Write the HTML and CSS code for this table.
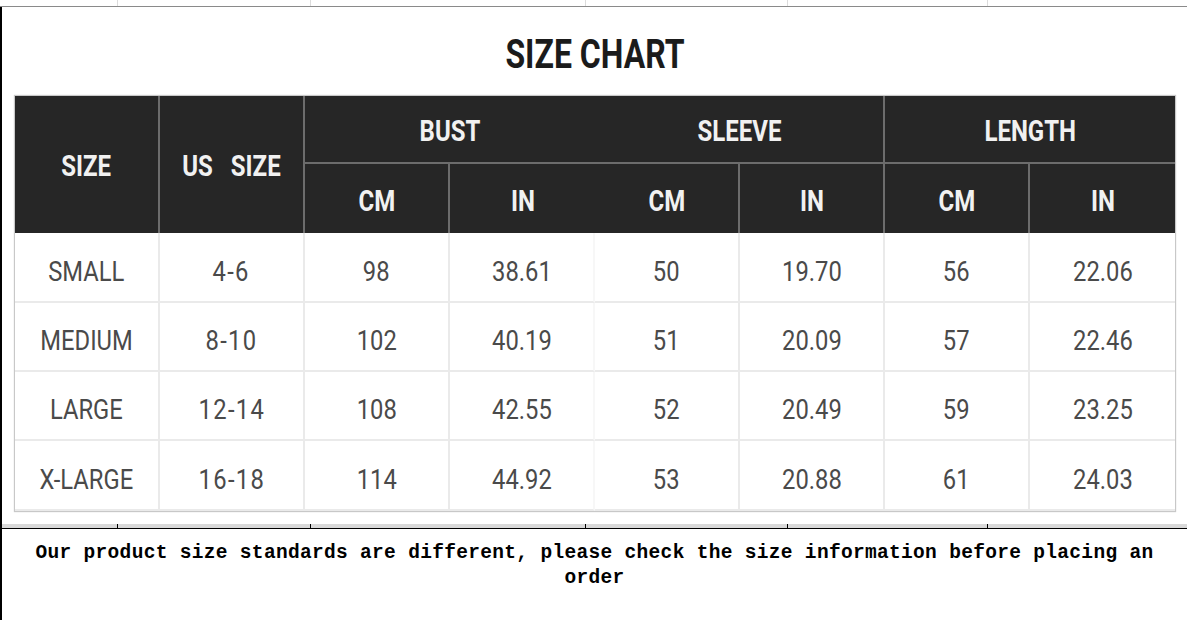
FILE: index.html
```html
<!DOCTYPE html>
<html lang="en">
<head>
<meta charset="utf-8">
<title>Size Chart</title>
<link rel="stylesheet" href="styles.css">
</head>
<body>
<div class="page">
  <div class="top-strip">
    <span></span><span></span><span></span><span></span><span></span><span></span>
  </div>
  <div class="main">
    <div class="chart">
      <h1 class="title"><span class="cx">SIZE CHART</span></h1>
      <div class="size-grid">
        <div class="hd span2 br"><span class="cx">SIZE</span></div>
        <div class="hd span2 br"><span class="cx us">US&nbsp;&nbsp;&nbsp;SIZE</span></div>
        <div class="hd grp bb"><span class="cx">BUST</span></div>
        <div class="hd grp bb br"><span class="cx">SLEEVE</span></div>
        <div class="hd grp bb"><span class="cx">LENGTH</span></div>
        <div class="hd br"><span class="cx">CM</span></div>
        <div class="hd"><span class="cx">IN</span></div>
        <div class="hd br"><span class="cx">CM</span></div>
        <div class="hd br"><span class="cx">IN</span></div>
        <div class="hd br"><span class="cx">CM</span></div>
        <div class="hd"><span class="cx">IN</span></div>

        <div class="td"><span class="cb">SMALL</span></div>
        <div class="td"><span class="cb range">4-6</span></div>
        <div class="td"><span class="cb">98</span></div>
        <div class="td faint"><span class="cb">38.61</span></div>
        <div class="td"><span class="cb">50</span></div>
        <div class="td"><span class="cb">19.70</span></div>
        <div class="td"><span class="cb">56</span></div>
        <div class="td last"><span class="cb">22.06</span></div>

        <div class="td"><span class="cb">MEDIUM</span></div>
        <div class="td"><span class="cb range">8-10</span></div>
        <div class="td"><span class="cb">102</span></div>
        <div class="td faint"><span class="cb">40.19</span></div>
        <div class="td"><span class="cb">51</span></div>
        <div class="td"><span class="cb">20.09</span></div>
        <div class="td"><span class="cb">57</span></div>
        <div class="td last"><span class="cb">22.46</span></div>

        <div class="td"><span class="cb">LARGE</span></div>
        <div class="td"><span class="cb range">12-14</span></div>
        <div class="td"><span class="cb">108</span></div>
        <div class="td faint"><span class="cb">42.55</span></div>
        <div class="td"><span class="cb">52</span></div>
        <div class="td"><span class="cb">20.49</span></div>
        <div class="td"><span class="cb">59</span></div>
        <div class="td last"><span class="cb">23.25</span></div>

        <div class="td"><span class="cb">X-LARGE</span></div>
        <div class="td"><span class="cb range">16-18</span></div>
        <div class="td"><span class="cb">114</span></div>
        <div class="td faint"><span class="cb">44.92</span></div>
        <div class="td"><span class="cb">53</span></div>
        <div class="td"><span class="cb">20.88</span></div>
        <div class="td"><span class="cb">61</span></div>
        <div class="td last"><span class="cb">24.03</span></div>
      </div>
    </div>
    <div class="rule">
      <span></span><span></span><span></span><span></span><span></span><span></span>
    </div>
    <p class="note">Our product size standards are different, please check the size information before placing an order</p>
  </div>
</div>
</body>
</html>
```
FILE: styles.css
```css
* { box-sizing: border-box; }

html, body {
  margin: 0;
  padding: 0;
  background: #ffffff;
}

.page {
  width: 1187px;
  height: 620px;
  overflow: hidden;
  display: flex;
  flex-direction: column;
}

.top-strip {
  height: 7px;
  display: grid;
  grid-template-columns: 117px 193px 275px 202px 200px 1fr;
  border-bottom: 1px solid #8a8a8a;
}
.top-strip span + span {
  border-left: 1px solid #dcdcdc;
}

.main {
  flex: 1;
  border-left: 2px solid #000;
  display: flex;
  flex-direction: column;
}

.chart {
  padding: 28px 0 13px 13px;
}

.title {
  margin: 0 0 21px 0;
  width: 1160px;
  text-align: center;
  font-family: Roboto, "Liberation Sans", sans-serif;
  font-weight: 700;
  font-size: 40px;
  line-height: 40px;
  color: #1b1b1b;
}

.cx {
  display: inline-block;
  transform: scaleX(0.8);
  white-space: nowrap;
}
.cb {
  display: inline-block;
  transform: scaleX(0.88);
  white-space: nowrap;
}
.cb.range {
  letter-spacing: 1.5px;
}

.size-grid {
  display: grid;
  width: 1160px;
  grid-template-columns: repeat(8, 145px);
  grid-template-rows: 68px 69px 70px 69px 69px 70px;
  box-shadow: 0 0 1px 1px #c8c8c8;
}

.hd {
  background: #262626;
  color: #f1f1f1;
  font-family: Roboto, "Liberation Sans", sans-serif;
  font-weight: 700;
  font-size: 30px;
  display: flex;
  align-items: center;
  justify-content: center;
  padding-top: 4px;
}
.hd.span2 { grid-row: span 2; padding-top: 2px; }
.hd.grp { grid-column: span 2; padding-top: 2px; }
.hd.br { border-right: 2px solid #6c6c6c; }
.hd.bb { border-bottom: 2px solid #6c6c6c; }

.td {
  display: flex;
  align-items: center;
  justify-content: center;
  padding-top: 9px;
  border-right: 2px solid #eaeaea;
  border-bottom: 2px solid #eaeaea;
  font-family: Roboto, "Liberation Sans", sans-serif;
  font-weight: 400;
  font-size: 27px;
  color: #4a4a4a;
}
.td.faint { border-right-color: #f7f7f7; }
.td.last { border-right: none; }

.rule {
  height: 5px;
  display: grid;
  grid-template-columns: 115px 193px 275px 202px 200px 1fr;
  background: #d9d9d9;
  border-bottom: 1px solid #000;
}
.rule span + span {
  border-left: 1px solid #000;
}

.note {
  margin: 0;
  padding: 12px 16px 0 16px;
  text-align: center;
  font-family: "Liberation Mono", "Courier New", monospace;
  font-weight: 700;
  font-size: 19.5px;
  letter-spacing: 0.32px;
  line-height: 25px;
  color: #000;
}
```
